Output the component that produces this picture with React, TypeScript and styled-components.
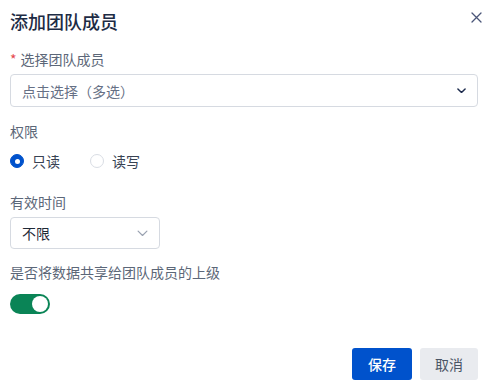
import React, { useState } from "react";
import styled, { createGlobalStyle } from "styled-components";

const Global = createGlobalStyle`
  html, body { margin: 0; padding: 0; background: #ffffff; }
  body { font-family: "Noto Sans CJK SC", "Noto Sans", sans-serif; }
  * { box-sizing: border-box; }
`;

const Dialog = styled.div`
  width: 488px;
  height: 385px;
  padding: 9px 10px 0 10px;
  display: flex;
  flex-direction: column;
  background: #fff;
`;

const Header = styled.div`
  display: flex;
  align-items: center;
  justify-content: space-between;
  height: 24px;
`;

const Title = styled.h1`
  margin: 0;
  font-size: 18px;
  line-height: 24px;
  font-weight: 500;
  color: #1d2b44;
`;

const CloseButton = styled.button`
  border: none;
  background: none;
  padding: 0;
  width: 16px;
  height: 16px;
  margin-right: -6px;
  margin-top: -8px;
  display: flex;
  align-items: center;
  justify-content: center;
  cursor: pointer;
`;

const Field = styled.div<{ $mt: number }>`
  margin-top: ${(p) => p.$mt}px;
  display: flex;
  flex-direction: column;
`;

const Label = styled.div`
  font-size: 14px;
  line-height: 20px;
  color: #5c6778;
  display: flex;
  align-items: center;
`;

const Required = styled.span`
  color: #e5484d;
  margin-right: 4px;
  font-size: 14px;
`;

const SelectBox = styled.div<{ $width?: number; $height: number }>`
  margin-top: 5px;
  width: ${(p) => (p.$width ? `${p.$width}px` : "100%")};
  height: ${(p) => p.$height}px;
  border: 1px solid #d6dae1;
  border-radius: 4px;
  padding: 0 11px 0 11px;
  display: flex;
  align-items: center;
  justify-content: space-between;
`;

const SelectText = styled.span<{ $placeholder?: boolean }>`
  font-size: 14px;
  color: ${(p) => (p.$placeholder ? "#667085" : "#1f2937")};
`;

const RadioRow = styled.div`
  margin-top: 10px;
  height: 20px;
  display: flex;
  align-items: center;
  gap: 30px;
`;

const RadioItem = styled.label`
  display: flex;
  align-items: center;
  gap: 8px;
  font-size: 14px;
  line-height: 20px;
  color: #384253;
  cursor: pointer;
`;

const RadioDot = styled.span<{ $checked: boolean }>`
  width: 14px;
  height: 14px;
  border-radius: 50%;
  display: inline-flex;
  align-items: center;
  justify-content: center;
  background: ${(p) => (p.$checked ? "#0052cc" : "#fff")};
  border: 1px solid ${(p) => (p.$checked ? "#0052cc" : "#d9dde4")};
  &::after {
    content: "";
    width: 5px;
    height: 5px;
    border-radius: 50%;
    background: #fff;
    display: ${(p) => (p.$checked ? "block" : "none")};
  }
`;

const Toggle = styled.button<{ $on: boolean }>`
  margin-top: 12px;
  width: 40px;
  height: 20px;
  border: none;
  padding: 2px;
  border-radius: 10px;
  background: ${(p) => (p.$on ? "#0a8456" : "#c4c9d2")};
  display: flex;
  justify-content: ${(p) => (p.$on ? "flex-end" : "flex-start")};
  cursor: pointer;
`;

const Knob = styled.span`
  width: 16px;
  height: 16px;
  border-radius: 50%;
  background: #fff;
`;

const Footer = styled.div`
  margin-top: auto;
  margin-bottom: 5px;
  display: flex;
  justify-content: flex-end;
  gap: 8px;
`;

const Button = styled.button<{ $primary?: boolean }>`
  height: 32px;
  width: ${(p) => (p.$primary ? 60 : 58)}px;
  padding: 0;
  border: none;
  border-radius: 3px;
  font-family: "Noto Sans CJK SC", sans-serif;
  font-size: 14px;
  font-weight: ${(p) => (p.$primary ? 500 : 400)};
  background: ${(p) => (p.$primary ? "#0052cc" : "#e9ebef")};
  color: ${(p) => (p.$primary ? "#ffffff" : "#4a5565")};
  cursor: pointer;
`;

const Chevron = ({ color, width, stroke }: { color: string; width: number; stroke: number }) => (
  <svg width={width} height={width * 0.6} viewBox="0 0 10 6" fill="none">
    <path d="M1 1 L5 5 L9 1" stroke={color} strokeWidth={stroke} strokeLinecap="round" strokeLinejoin="round" />
  </svg>
);

export default function App() {
  const [mode, setMode] = useState<"r" | "rw">("r");
  const [on, setOn] = useState(true);
  return (
    <>
      <Global />
      <Dialog>
        <Header>
          <Title>添加团队成员</Title>
          <CloseButton aria-label="close">
            <svg width="11" height="11" viewBox="0 0 11 11" fill="none">
              <path d="M1 1 L10 10 M10 1 L1 10" stroke="#4a5578" strokeWidth="1.3" strokeLinecap="round" />
            </svg>
          </CloseButton>
        </Header>

        <Field $mt={16}>
          <Label>
            <Required>*</Required>选择团队成员
          </Label>
          <SelectBox $height={33}>
            <SelectText $placeholder>点击选择（多选）</SelectText>
            <Chevron color="#1d2b4d" width={9} stroke={1.6} />
          </SelectBox>
        </Field>

        <Field $mt={14}>
          <Label>权限</Label>
          <RadioRow>
            <RadioItem onClick={() => setMode("r")}>
              <RadioDot $checked={mode === "r"} />
              只读
            </RadioItem>
            <RadioItem onClick={() => setMode("rw")}>
              <RadioDot $checked={mode === "rw"} />
              读写
            </RadioItem>
          </RadioRow>
        </Field>

        <Field $mt={21}>
          <Label>有效时间</Label>
          <SelectBox $width={150} $height={32}>
            <SelectText>不限</SelectText>
            <Chevron color="#9aa2b1" width={11} stroke={1.1} />
          </SelectBox>
        </Field>

        <Field $mt={13}>
          <Label>是否将数据共享给团队成员的上级</Label>
          <Toggle $on={on} onClick={() => setOn(!on)} aria-label="toggle">
            <Knob />
          </Toggle>
        </Field>

        <Footer>
          <Button $primary>保存</Button>
          <Button>取消</Button>
        </Footer>
      </Dialog>
    </>
  );
}
